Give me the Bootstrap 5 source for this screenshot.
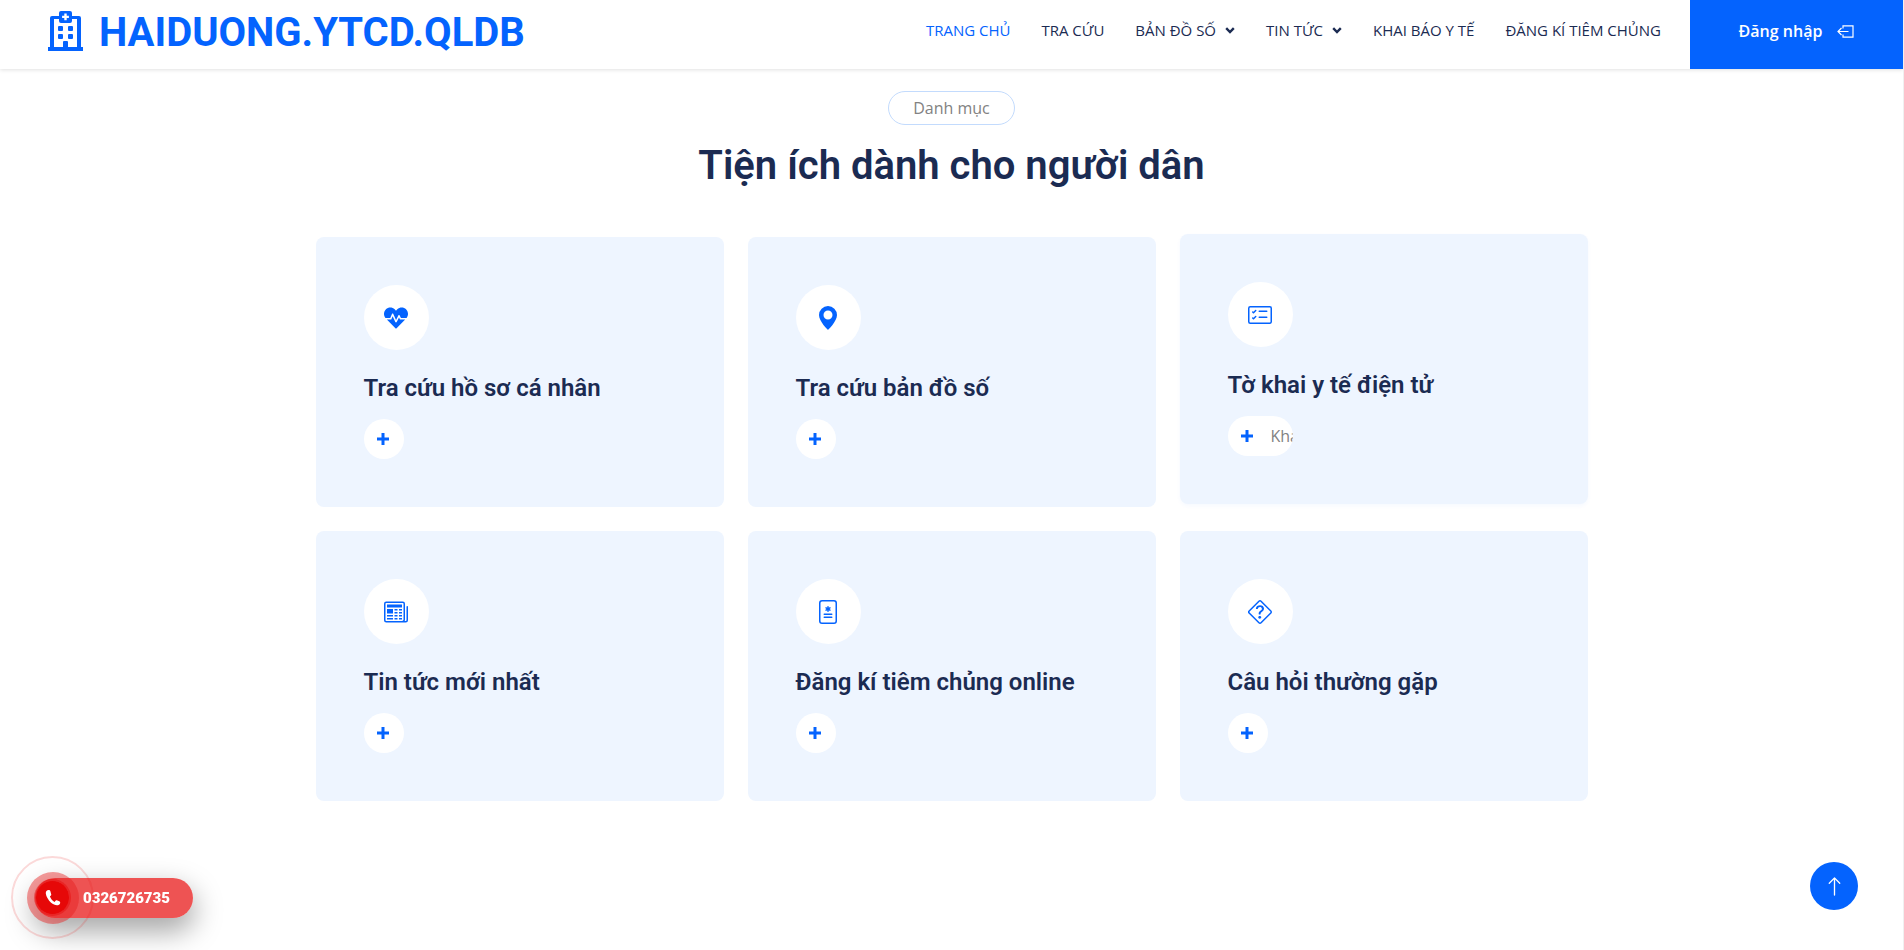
<!DOCTYPE html>
<html lang="vi">
<head>
<meta charset="utf-8">
<meta name="viewport" content="width=device-width, initial-scale=1">
<title>HAIDUONG.YTCD.QLDB</title>
<link href="https://cdn.jsdelivr.net/npm/bootstrap@5.3.0/dist/css/bootstrap.min.css" rel="stylesheet">
<style>
  :root { --brand: #0463fe; --navy: #1b2b52; --tint: #eef5ff; }
  body { font-family: "Open Sans", sans-serif; font-size: 16px; line-height: 24px; color: #828282; background: #fff; border-right: 1px solid #f0f0f0; }
  h1, h2, .brand-name { font-family: Roboto, sans-serif; color: var(--navy); }
  a { text-decoration: none; }
  svg { display: block; flex: none; fill: currentColor; }

  .site-header { min-height: 69px; background: #fff; box-shadow: 0 1px 4px rgba(0, 0, 0, .12); }
  .brand-link { padding: 0 0 7px 48px; gap: 16px; color: var(--brand); }
  .brand-name { padding-top: 3px; font-size: 40px; line-height: 48px; font-weight: 700; color: var(--brand); }
  .main-menu { gap: 31px; padding: 0 29px 9px 0; }
  .main-menu a { color: var(--navy); font-size: 15px; gap: 9px; }
  .main-menu a.active { color: var(--brand); }
  .login-link { width: 213px; padding-bottom: 7px; gap: 15px; background: var(--brand); color: #fff; font-weight: 600; }

  .utilities { max-width: 1296px; padding-top: 22px; }
  .section-tag { padding: 4px 24px; border: 1px solid #c3dbfd; border-radius: 17px; }
  .section-title { font-size: 40px; line-height: 48px; font-weight: 600; margin: 17px 0 47px; }
  .utility { background: var(--tint); border-radius: 8px; padding: 48px; }
  .utility.raised { transform: translateY(-3px); box-shadow: 0 2px 4px rgba(4, 99, 254, .04); }
  .utility-icon { width: 65px; height: 65px; border-radius: 50%; background: #fff; color: var(--brand); }
  .utility-title { font-size: 24px; line-height: 29px; font-weight: 600; margin: 24px 0 16px; }
  .more-link { width: 40px; height: 40px; padding-left: 13px; gap: 18px; border-radius: 20px; background: #fff; color: #828282; overflow: hidden; white-space: nowrap; }
  .raised .more-link { width: 65px; }
  .more-link svg { color: var(--brand); }

  .to-top { right: 46px; bottom: 40px; width: 48px; height: 48px; border-radius: 50%; background: var(--brand); color: #fff; }

  .hotline { left: 11px; bottom: 11px; height: 83px; }
  .hotline-bar { height: 40px; margin-left: 24px; padding: 0 23px 0 48px; border-radius: 20px; background: rgba(232, 17, 17, .72); box-shadow: 0 12px 28px 2px rgba(0, 0, 0, .34); color: #fff; font-family: Roboto, sans-serif; font-size: 15px; font-weight: 900; }
  .hotline-ring { left: 0; top: 0; width: 83px; height: 83px; border: 2px solid rgba(232, 17, 17, .16); border-radius: 50%; }
  .hotline-halo { width: 52px; height: 52px; border-radius: 50%; background: rgba(230, 30, 30, .45); }
  .hotline-dot { width: 37px; height: 37px; border: 2px solid rgba(230, 8, 8, .45); border-radius: 50%; background: #e60808; background-clip: padding-box; color: #fff; }
</style>
</head>
<body class="min-vh-100">
<header class="site-header d-flex flex-wrap flex-xl-nowrap align-items-stretch">
  <a class="brand-link d-flex align-items-center me-auto" href="#">
    <svg width="35" height="40" viewBox="0 0 35 40" aria-hidden="true">
      <path fill-rule="evenodd" d="M13 0h9a2 2 0 0 1 2 2v3h7a2 2 0 0 1 2 2v29h2v4H0v-4h2V7a2 2 0 0 1 2-2h7V2a2 2 0 0 1 2-2zM11 8H6v28h9v-5a1 1 0 0 1 1-1h3a1 1 0 0 1 1 1v5h9V8h-5v2a2 2 0 0 1-2 2h-9a2 2 0 0 1-2-2zM16.300 2.500v2.200h-2.200v2.400h2.200v2.200h2.400V7.100h2.200V4.700h-2.200V2.500z"/>
      <rect x="10" y="15" width="5" height="5" rx="1"/><rect x="20" y="15" width="5" height="5" rx="1"/>
      <rect x="10" y="23" width="5" height="5" rx="1"/><rect x="20" y="23" width="5" height="5" rx="1"/>
    </svg>
    <span class="brand-name">HAIDUONG.YTCD.QLDB</span>
  </a>
  <nav class="d-flex" aria-label="Menu chính">
    <ul class="main-menu list-unstyled d-flex flex-wrap align-items-center mb-0">
      <li><a class="active" href="#">TRANG CHỦ</a></li>
      <li><a href="#">TRA CỨU</a></li>
      <li><a class="d-flex align-items-center" href="#">BẢN ĐỒ SỐ <svg width="10" height="7" viewBox="0 0 10 7" aria-hidden="true"><path d="M1.200 1.200 5 5l3.800-3.800" fill="none" stroke="currentColor" stroke-width="2.400"/></svg></a></li>
      <li><a class="d-flex align-items-center" href="#">TIN TỨC <svg width="10" height="7" viewBox="0 0 10 7" aria-hidden="true"><path d="M1.200 1.200 5 5l3.800-3.800" fill="none" stroke="currentColor" stroke-width="2.400"/></svg></a></li>
      <li><a href="#">KHAI BÁO Y TẾ</a></li>
      <li><a href="#">ĐĂNG KÍ TIÊM CHỦNG</a></li>
    </ul>
  </nav>
  <a class="login-link d-flex align-items-center justify-content-center" href="#">Đăng nhập
    <svg width="17" height="13" viewBox="0 0 17 13" aria-hidden="true"><path d="M6 3.500V.800h10v11.400H6V9.500M11.500 6.500H1M4.500 3 1 6.500 4.500 10" fill="none" stroke="currentColor" stroke-width="1.200"/></svg>
  </a>
</header>

<main class="utilities container-fluid px-0">
  <div class="text-center">
    <span class="section-tag d-inline-block align-top">Danh mục</span>
    <h1 class="section-title">Tiện ích dành cho người dân</h1>
  </div>
  <div class="row row-cols-1 row-cols-md-2 row-cols-lg-3 g-4 mx-0 mt-0">
    <div class="col mt-0">
      <article class="utility h-100">
        <div class="utility-icon d-flex align-items-center justify-content-center"><svg width="24" height="24" viewBox="0 0 512 512" aria-hidden="true"><path d="M320.200 243.800l-49.700 99.400c-6 12.100-23.400 11.700-28.900-.6l-56.900-126.300-30 71.700H60.600l182.500 186.500c7.100 7.300 18.600 7.300 25.700 0L451.400 288H342.300l-22.100-44.200zM473.700 73.900l-2.400-2.500c-51.500-52.600-135.800-52.600-187.400 0L256 100l-27.900-28.500c-51.500-52.700-135.900-52.700-187.400 0l-2.400 2.400C-10.400 123.700-12.500 203 31 256h102.400l35.900-86.200c5.400-12.900 23.600-13.100 29.300-.4l58.100 129.100 49-97.900c5.900-11.800 22.700-11.800 28.600 0l27.600 55.200H481c43.500-53 41.400-132.300-7.300-182.100z"/></svg></div>
        <h2 class="utility-title">Tra cứu hồ sơ cá nhân</h2>
        <a class="more-link d-flex align-items-center" href="#" aria-label="Tra cứu hồ sơ cá nhân"><svg width="12" height="12" viewBox="0 0 12 12"><path d="M4.500 0h3v4.500H12v3H7.500V12h-3V7.500H0v-3h4.500z"/></svg></a>
      </article>
    </div>
    <div class="col mt-0">
      <article class="utility h-100">
        <div class="utility-icon d-flex align-items-center justify-content-center"><svg width="24" height="24" viewBox="0 0 16 16" aria-hidden="true"><path d="M8 16s6-5.686 6-10A6 6 0 0 0 2 6c0 4.314 6 10 6 10zm0-7a3 3 0 1 1 0-6 3 3 0 0 1 0 6z"/></svg></div>
        <h2 class="utility-title">Tra cứu bản đồ số</h2>
        <a class="more-link d-flex align-items-center" href="#" aria-label="Tra cứu bản đồ số"><svg width="12" height="12" viewBox="0 0 12 12"><path d="M4.500 0h3v4.500H12v3H7.500V12h-3V7.500H0v-3h4.500z"/></svg></a>
      </article>
    </div>
    <div class="col mt-0">
      <article class="utility raised h-100">
        <div class="utility-icon d-flex align-items-center justify-content-center"><svg width="24" height="24" viewBox="0 0 16 16" aria-hidden="true"><path d="M14.500 3a.5.5 0 0 1 .5.5v9a.5.5 0 0 1-.5.5h-13a.5.5 0 0 1-.5-.5v-9a.5.5 0 0 1 .5-.5h13zm-13-1A1.500 1.500 0 0 0 0 3.500v9A1.500 1.500 0 0 0 1.500 14h13a1.500 1.500 0 0 0 1.500-1.500v-9A1.500 1.500 0 0 0 14.500 2h-13z"/><path d="M7 5.500a.5.5 0 0 1 .5-.5h5a.5.5 0 0 1 0 1h-5a.5.5 0 0 1-.5-.5zm-1.496-.854a.5.5 0 0 1 0 .708l-1.500 1.500a.5.5 0 0 1-.708 0l-.5-.5a.5.5 0 1 1 .708-.708l.146.147 1.146-1.147a.5.5 0 0 1 .708 0zM7 9.500a.5.5 0 0 1 .5-.5h5a.5.5 0 0 1 0 1h-5a.5.5 0 0 1-.5-.5zm-1.496-.854a.5.5 0 0 1 0 .708l-1.500 1.500a.5.5 0 0 1-.708 0l-.5-.5a.5.5 0 0 1 .708-.708l.146.147 1.146-1.147a.5.5 0 0 1 .708 0z"/></svg></div>
        <h2 class="utility-title">Tờ khai y tế điện tử</h2>
        <a class="more-link d-flex align-items-center" href="#"><svg width="12" height="12" viewBox="0 0 12 12"><path d="M4.500 0h3v4.500H12v3H7.500V12h-3V7.500H0v-3h4.500z"/></svg>Khai báo</a>
      </article>
    </div>
    <div class="col">
      <article class="utility h-100">
        <div class="utility-icon d-flex align-items-center justify-content-center"><svg width="24" height="24" viewBox="0 0 16 16" aria-hidden="true"><path d="M0 2.500A1.500 1.500 0 0 1 1.500 1h11A1.500 1.500 0 0 1 14 2.500v10.528c0 .3-.05.654-.238.972h.738a.5.5 0 0 0 .5-.5v-9a.5.5 0 0 1 1 0v9a1.500 1.500 0 0 1-1.500 1.500H1.497A1.497 1.497 0 0 1 0 13.500v-11zM12 14c.37 0 .654-.211.853-.441.092-.106.147-.279.147-.531V2.500a.5.5 0 0 0-.5-.5h-11a.5.5 0 0 0-.5.5v11c0 .278.223.5.497.5H12z"/><path d="M2 3h10v2H2V3zm0 3h4v3H2V6zm0 4h4v1H2v-1zm0 2h4v1H2v-1zm5-6h2v1H7V6zm3 0h2v1h-2V6zM7 8h2v1H7V8zm3 0h2v1h-2V8zm-3 2h2v1H7v-1zm3 0h2v1h-2v-1zm-3 2h2v1H7v-1zm3 0h2v1h-2v-1z"/></svg></div>
        <h2 class="utility-title">Tin tức mới nhất</h2>
        <a class="more-link d-flex align-items-center" href="#" aria-label="Tin tức mới nhất"><svg width="12" height="12" viewBox="0 0 12 12"><path d="M4.500 0h3v4.500H12v3H7.500V12h-3V7.500H0v-3h4.500z"/></svg></a>
      </article>
    </div>
    <div class="col">
      <article class="utility h-100">
        <div class="utility-icon d-flex align-items-center justify-content-center"><svg width="24" height="24" viewBox="0 0 16 16" aria-hidden="true"><path d="M8.500 4.500a.5.5 0 0 0-1 0v.634l-.549-.317a.5.5 0 1 0-.5.866L7 6l-.549.317a.5.5 0 1 0 .5.866l.549-.317V7.500a.5.5 0 1 0 1 0v-.634l.549.317a.5.5 0 1 0 .5-.866L9 6l.549-.317a.5.5 0 1 0-.5-.866l-.549.317V4.500zM5.500 9a.5.5 0 0 0 0 1h5a.5.5 0 0 0 0-1h-5zm0 2a.5.5 0 0 0 0 1h5a.5.5 0 0 0 0-1h-5z"/><path d="M2 2a2 2 0 0 1 2-2h8a2 2 0 0 1 2 2v12a2 2 0 0 1-2 2H4a2 2 0 0 1-2-2V2zm10-1H4a1 1 0 0 0-1 1v12a1 1 0 0 0 1 1h8a1 1 0 0 0 1-1V2a1 1 0 0 0-1-1z"/></svg></div>
        <h2 class="utility-title">Đăng kí tiêm chủng online</h2>
        <a class="more-link d-flex align-items-center" href="#" aria-label="Đăng kí tiêm chủng online"><svg width="12" height="12" viewBox="0 0 12 12"><path d="M4.500 0h3v4.500H12v3H7.500V12h-3V7.500H0v-3h4.500z"/></svg></a>
      </article>
    </div>
    <div class="col">
      <article class="utility h-100">
        <div class="utility-icon d-flex align-items-center justify-content-center"><svg width="24" height="24" viewBox="0 0 16 16" aria-hidden="true"><path d="M6.950.435c.58-.58 1.520-.58 2.100 0l6.515 6.516c.58.58.58 1.519 0 2.098L9.050 15.565c-.58.58-1.519.58-2.098 0L.435 9.050a1.482 1.482 0 0 1 0-2.098L6.950.435zm1.400.7a.495.495 0 0 0-.7 0L1.134 7.650a.495.495 0 0 0 0 .7l6.516 6.516a.495.495 0 0 0 .7 0l6.516-6.516a.495.495 0 0 0 0-.7L8.350 1.134z"/><path d="M5.255 5.786a.237.237 0 0 0 .241.247h.825c.138 0 .248-.113.266-.25.09-.656.54-1.134 1.342-1.134.686 0 1.314.343 1.314 1.168 0 .635-.374.927-.965 1.371-.673.489-1.206 1.060-1.168 1.987l.003.217a.25.25 0 0 0 .25.246h.811a.25.25 0 0 0 .25-.25v-.105c0-.718.273-.927 1.010-1.486.609-.463 1.244-.977 1.244-2.056 0-1.511-1.276-2.241-2.673-2.241-1.267 0-2.655.59-2.750 2.286zm1.557 5.763c0 .533.425.927 1.010.927.609 0 1.028-.394 1.028-.927 0-.552-.42-.94-1.029-.94-.584 0-1.009.388-1.009.94z"/></svg></div>
        <h2 class="utility-title">Câu hỏi thường gặp</h2>
        <a class="more-link d-flex align-items-center" href="#" aria-label="Câu hỏi thường gặp"><svg width="12" height="12" viewBox="0 0 12 12"><path d="M4.500 0h3v4.500H12v3H7.500V12h-3V7.500H0v-3h4.500z"/></svg></a>
      </article>
    </div>
  </div>
</main>

<a class="hotline position-fixed d-flex align-items-center" href="tel:0326726735">
  <span class="hotline-bar d-flex align-items-center">0326726735</span>
  <span class="hotline-ring position-absolute d-flex align-items-center justify-content-center">
    <span class="hotline-halo d-flex align-items-center justify-content-center flex-shrink-0">
      <span class="hotline-dot d-flex align-items-center justify-content-center flex-shrink-0">
        <svg width="16" height="17" viewBox="0 0 16 17" aria-hidden="true"><path d="M4 1C2 .8.6 2.200.8 4.600c.4 3 2.600 6.900 5.300 9.200 2.200 1.800 4.900 2.900 6.900 2.400 1.500-.4 2.300-1.500 2.200-2.700 0-.6-.4-.9-.9-1.200l-2.500-1c-.6-.2-1 0-1.300.4l-.9 1.200C7.600 12 5.700 9.600 4.900 7.500l1-.9c.4-.4.5-.8.3-1.300L5.300 1.900C5.100 1.300 4.700 1 4 1z"/></svg>
      </span>
    </span>
  </span>
</a>
<a class="to-top position-fixed d-flex align-items-center justify-content-center" href="#" aria-label="Lên đầu trang">
  <svg width="21" height="21" viewBox="0 0 16 16"><path d="M8 15a.5.5 0 0 0 .5-.5V2.707l3.146 3.147a.5.5 0 0 0 .708-.708l-4-4a.5.5 0 0 0-.708 0l-4 4a.5.5 0 1 0 .708.708L7.500 2.707V14.500a.5.5 0 0 0 .5.5z"/></svg>
</a>
<script src="https://cdn.jsdelivr.net/npm/bootstrap@5.3.0/dist/js/bootstrap.bundle.min.js"></script>
</body>
</html>
